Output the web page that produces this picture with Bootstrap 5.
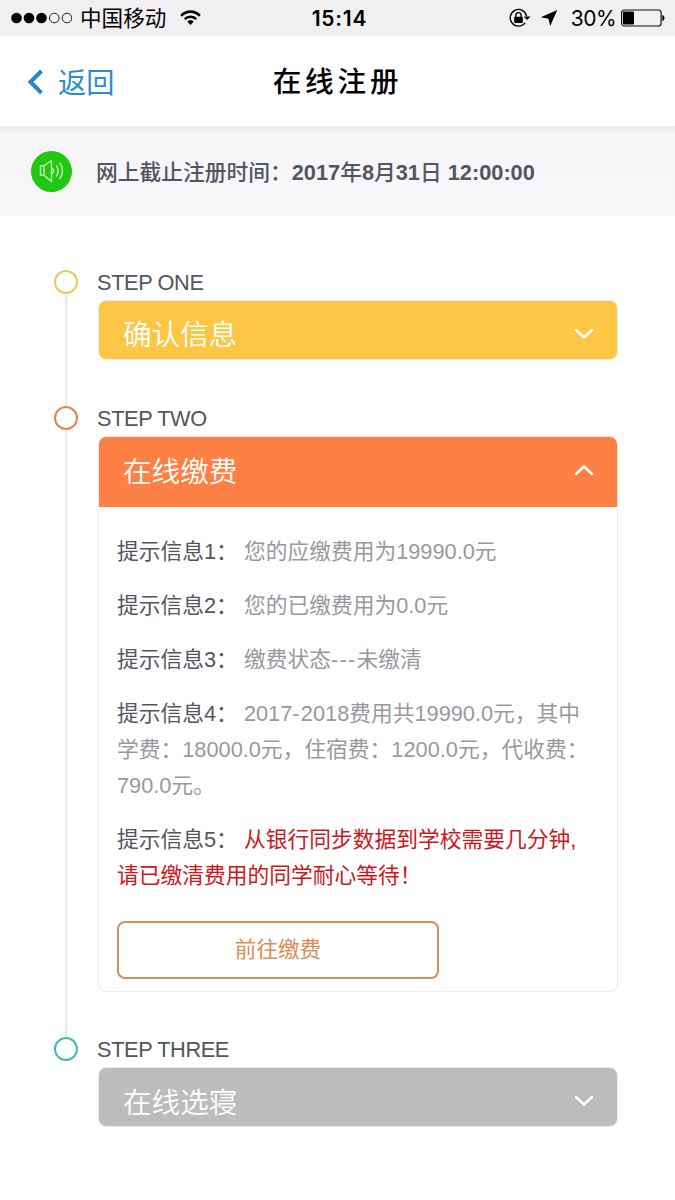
<!DOCTYPE html>
<html lang="zh-CN">
<head>
<meta charset="utf-8">
<meta name="viewport" content="width=device-width, initial-scale=1">
<title>在线注册</title>
<link rel="stylesheet" href="https://cdn.jsdelivr.net/npm/bootstrap@5.3.0/dist/css/bootstrap.min.css">
<style>
body{font-family:"Liberation Sans","Noto Sans CJK SC",sans-serif;font-size:21.75px;color:#53555f;background:#fff;line-height:36px;overflow-x:hidden}
svg{display:block;flex:none}
.status-bar{height:36px;background:#f0f0f0;color:#000;padding:0 10px 0 11px}
.signal{width:61px}
.carrier{margin-left:8px;padding-top:2px;width:87px;font-size:21.6px;white-space:nowrap}
.clock{font:600 21px/36px Inter,sans-serif;letter-spacing:.8px;padding-top:1px}
.percent{font:400 21px/36px Inter,sans-serif;letter-spacing:-.5px;padding-top:1px}
.top-bar{height:90px;padding:3px 0 0 27px}
.back-link{color:#2a8fc6;font-size:28.2px;gap:14px}
.back-link svg{margin-top:-2px}
.page-title{font-size:28.6px;font-weight:500;color:#000;letter-spacing:3.8px}
.notice{height:90px;padding-left:31px;background:linear-gradient(#e9e9ec,#f6f6f9 8px,#f7f7fa)}
.notice-icon{width:41px;height:41px;background:#21c710}
.notice-text{margin-left:24px;padding-top:3px;font-weight:500;white-space:nowrap}
.notice-text b{font-weight:700}
.timeline{padding:47.5px 57px 0 54px}
.rail{width:24px;margin-right:20px}
.dot{width:24px;height:24px;border:2px solid;border-radius:50%;margin-top:6px;flex:none}
.rail-line{width:2px;background:#e9e9ea;margin-bottom:-6px}
.step-body{padding-bottom:40px}
.step-name{margin-left:-1px;font-size:21.75px;letter-spacing:-.38px;height:36px;padding-top:1px}
.panel{border:1px solid #ececee;border-radius:8px;overflow:hidden}
.panel-head{height:58px;padding:11px 23px 0 24px;color:#fff;font-size:28.6px;font-weight:350}
.panel-head svg{margin-top:-3px}
.panel-open .panel-head{height:70px;padding-top:0}
.tone-yellow{background:#fdc645}
.tone-orange{background:#ff8044}
.tone-grey{background:#bdbbbe}
.panel-content{padding:27px 0 12.5px 18px}
.tip{margin-bottom:18px;color:#98999e;white-space:nowrap}
.tip-label{color:#53555f}
.tip-alert{color:#d0161b}
.hyphens{letter-spacing:1.3px}
.pay-btn{width:322px;height:58px;margin-top:27px;border:2px solid #d98b5f;border-radius:8px;color:#df8b55;font-size:21.6px;line-height:1;background:#fff;padding:0}
</style>
</head>
<body>
<header>
  <div class="status-bar d-flex align-items-center position-relative">
    <svg class="signal" height="12" viewBox="0 0 61 12"><g fill="#000"><circle cx="5.500" cy="6" r="5.300"/><circle cx="18" cy="6" r="5.300"/><circle cx="30.500" cy="6" r="5.300"/></g><g fill="none" stroke="#222"><circle cx="43.300" cy="6" r="4.800"/><circle cx="56" cy="6" r="4.800"/></g></svg>
    <span class="carrier">中国移动</span>
    <svg class="ms-2 ps-1" width="27" height="18" viewBox="0 0 26 18"><g fill="none" stroke="#000" stroke-width="2.900"><path d="M2.500 6.500a14 14 0 0 1 21 0"/><path d="M6.500 10.300a9 9 0 0 1 13 0"/></g><path d="M9.300 12.900a5.400 5.400 0 0 1 7.400 0L13 16.800z"/></svg>
    <span class="clock position-absolute start-50 translate-middle-x ps-1">15:14</span>
    <div class="d-flex align-items-center ms-auto">
      <svg width="22" height="20" viewBox="0 0 22 20"><path d="M16.100 14.800A8.300 8.300 0 1 1 17.600 8" fill="none" stroke="#000" stroke-width="1.300"/><path d="M14.800 8.400h6.700L18.100 12z"/><rect x="5.200" y="8.700" width="8.600" height="6.300" rx=".7"/><path d="M6.900 9V7.200a2.600 2.600 0 0 1 5.200 0V9" fill="none" stroke="#000" stroke-width="1.300"/></svg>
      <svg class="ms-2" width="20" height="18" viewBox="0 0 20 18"><path d="M18.300 1 11.200 17 9.500 9.700 1.800 8.200z"/></svg>
      <span class="percent ms-2 ps-1">30%</span>
      <svg class="ms-1" width="45" height="18" viewBox="0 0 45 18"><rect x="1.600" y="1" width="39.500" height="16" rx="2.800" fill="none" stroke="#111" stroke-width="1.200"/><rect x="3" y="2.600" width="11" height="12.800" rx=".8"/><path d="M42.300 5.800q2.200 1 2.200 3.200t-2.200 3.200z"/></svg>
    </div>
  </div>
  <nav class="top-bar d-flex align-items-center position-relative">
    <a class="back-link d-flex align-items-center text-decoration-none" href="#">
      <svg width="17" height="26" viewBox="0 0 17 26"><path d="M14.500 2 3.500 13l11 11" fill="none" stroke="#2389c5" stroke-width="4"/></svg>
      <span>返回</span>
    </a>
    <h1 class="page-title m-0 position-absolute start-50 translate-middle-x text-nowrap">在线注册</h1>
  </nav>
</header>
<section class="notice d-flex align-items-center">
  <span class="notice-icon rounded-circle d-flex align-items-center justify-content-center">
    <svg width="25" height="24" viewBox="0 0 25 24" fill="none" stroke="#b9f5ad" stroke-width="1.400" stroke-linejoin="round" stroke-linecap="round"><path d="M5 6.700H1.500v9.600H5zM5 6.700 12.500 1.500v21L5 16.300M12.500 8.500q4.500 3.500 0 6.700M17.500 7q3.500 5 0 10M21 4q5 8 0 15.500"/></svg>
  </span>
  <span class="notice-text">网上截止注册时间：<b>2017</b>年<b>8</b>月<b>31</b>日 <b>12:00:00</b></span>
</section>
<main class="timeline">
  <section class="d-flex">
    <div class="rail d-flex flex-column align-items-center"><span class="dot" style="color:#f1c565"></span><span class="rail-line flex-grow-1"></span></div>
    <div class="step-body flex-grow-1">
      <div class="step-name">STEP ONE</div>
      <div class="panel">
        <div class="panel-head tone-yellow d-flex align-items-center justify-content-between"><span>确认信息</span>
          <svg width="20" height="12" viewBox="0 0 20 12"><path d="m2 2 8 7.500L18 2" fill="none" stroke="#fff" stroke-width="2.500" stroke-linecap="round"/></svg></div>
      </div>
    </div>
  </section>
  <section class="d-flex">
    <div class="rail d-flex flex-column align-items-center"><span class="dot" style="color:#e5834f"></span><span class="rail-line flex-grow-1"></span></div>
    <div class="step-body flex-grow-1" style="padding-bottom:39px">
      <div class="step-name">STEP TWO</div>
      <div class="panel panel-open">
        <div class="panel-head tone-orange d-flex align-items-center justify-content-between"><span>在线缴费</span>
          <svg width="20" height="12" viewBox="0 0 20 12"><path d="m2 10 8-7.500 8 7.500" fill="none" stroke="#fff" stroke-width="2.500" stroke-linecap="round"/></svg></div>
        <div class="panel-content">
          <p class="tip"><span class="tip-label">提示信息1：</span> 您的应缴费用为19990.0元</p>
          <p class="tip"><span class="tip-label">提示信息2：</span> 您的已缴费用为0.0元</p>
          <p class="tip"><span class="tip-label">提示信息3：</span> 缴费状态<span class="hyphens">---</span>未缴清</p>
          <p class="tip"><span class="tip-label">提示信息4：</span> 2017<span class="hyphens">-</span>2018费用共19990.0元，其中<br>学费：18000.0元，住宿费：1200.0元，代收费：<br>790.0元。</p>
          <p class="tip mb-0"><span class="tip-label">提示信息5：</span> <span class="tip-alert">从银行同步数据到学校需要几分钟,<br>请已缴清费用的同学耐心等待！</span></p>
          <button class="pay-btn btn d-block" type="button">前往缴费</button>
        </div>
      </div>
    </div>
  </section>
  <section class="d-flex">
    <div class="rail d-flex flex-column align-items-center"><span class="dot" style="color:#3fbcae"></span></div>
    <div class="step-body flex-grow-1">
      <div class="step-name">STEP THREE</div>
      <div class="panel">
        <div class="panel-head tone-grey d-flex align-items-center justify-content-between"><span>在线选寝</span>
          <svg width="20" height="12" viewBox="0 0 20 12"><path d="m2 2 8 7.500L18 2" fill="none" stroke="#fff" stroke-width="2.500" stroke-linecap="round"/></svg></div>
      </div>
    </div>
  </section>
</main>
<script src="https://cdn.jsdelivr.net/npm/bootstrap@5.3.0/dist/js/bootstrap.bundle.min.js"></script>
</body>
</html>
